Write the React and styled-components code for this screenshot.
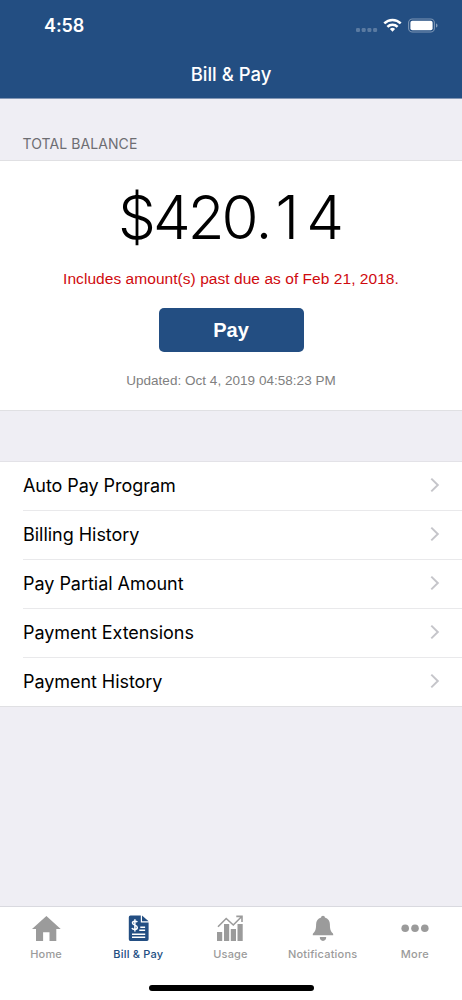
import React from "react";
import styled, { createGlobalStyle } from "styled-components";

const blue = "#234e82";
const gray = "#9b9b9b";
const inter = `Inter, "Liberation Sans", sans-serif`;
const helvetica = `"Liberation Sans", Arial, sans-serif`;

const GlobalStyle = createGlobalStyle`
  * { box-sizing: border-box; }
  body { margin: 0; background: #efeef4; font-family: ${inter}; }
`;

const Screen = styled.div`
  width: 462px;
  height: 1000px;
  display: flex;
  flex-direction: column;
  background: #efeef4;
  overflow: hidden;
`;

const Header = styled.header`
  flex: none;
  height: 99px;
  background: ${blue};
  border-bottom: 1px solid #8296b4;
  color: #fff;
`;

const StatusBar = styled.div`
  height: 50px;
  padding: 1px 24px 0 44px;
  display: flex;
  align-items: center;
  justify-content: space-between;
`;

const Clock = styled.span`
  font-size: 18px;
  font-weight: 600;
  letter-spacing: -0.1px;
`;

const StatusIcons = styled.svg`
  display: block;
`;

const NavTitle = styled.h1`
  margin: 0;
  height: 48px;
  line-height: 49px;
  text-align: center;
  font-size: 18.5px;
  font-weight: 550;
  letter-spacing: 0;
`;

const SectionLabel = styled.h2`
  flex: none;
  margin: 0;
  height: 62px;
  padding: 36px 22.5px 0;
  border-bottom: 1px solid #e0e0e3;
  font-size: 14px;
  line-height: 18px;
  font-weight: 400;
  letter-spacing: 0.08px;
  color: #6d6d72;
`;

const BalanceCard = styled.section`
  flex: none;
  height: 249px;
  background: #fff;
  display: flex;
  flex-direction: column;
  align-items: center;
  padding-top: 20px;
  font-family: ${helvetica};
`;

const Amount = styled.div`
  height: 72px;
  line-height: 72px;
  font-family: ${inter};
  font-size: 60px;
  font-weight: 300;
  color: #000;
`;

const Kern = styled.span`
  letter-spacing: ${(p) => p.$spacing}px;
`;

const PastDue = styled.p`
  margin: 16px 0 0;
  font-size: 15.5px;
  line-height: 20px;
  letter-spacing: 0.05px;
  color: #cf0a0e;
`;

const PayButton = styled.button`
  margin: 19px 0 0;
  width: 145px;
  height: 44px;
  padding: 0;
  border: 0;
  border-radius: 5px;
  background: ${blue};
  color: #fff;
  font-family: ${helvetica};
  font-size: 20px;
  font-weight: 700;
`;

const Updated = styled.p`
  margin: 20px 0 0;
  font-size: 13.5px;
  line-height: 18px;
  letter-spacing: 0.03px;
  color: #808080;
`;

const Menu = styled.ul`
  flex: none;
  list-style: none;
  margin: 0;
  padding: 0 0 0 23px;
  background: #fff;
  border-bottom: 1px solid #e0e0e3;
  border-top: 1px solid #e3e2e7;
`;

const Gap = styled.div`
  flex: none;
  height: 51px;
  border-top: 1px solid #e0e0e3;
`;

const MenuItem = styled.li`
  height: 49px;
  padding: 0 22px 2px 0;
  display: flex;
  align-items: center;
  justify-content: space-between;
  border-bottom: 1px solid #e9e9eb;
  font-size: 18px;
  color: #000;
  &:last-child { border-bottom: 0; height: 48px; }
`;

const TabBar = styled.nav`
  flex: none;
  height: 94px;
  margin-top: auto;
  background: #fff;
  border-top: 1px solid #d9d9df;
  display: flex;
  flex-direction: column;
  align-items: center;
`;

const Tabs = styled.div`
  width: 100%;
  height: 78px;
  display: grid;
  grid-template-columns: repeat(5, 92.2px);
`;

const Tab = styled.div`
  display: flex;
  flex-direction: column;
  align-items: center;
  padding-top: 6px;
  color: ${(p) => (p.$active ? blue : gray)};
`;

const TabIcon = styled.svg`
  display: block;
  fill: currentColor;
`;

const TabLabel = styled.span`
  margin-top: 2px;
  font-size: 11px;
  line-height: 14px;
  font-weight: 500;
  letter-spacing: 0.2px;
`;

const HomeIndicator = styled.div`
  width: 165px;
  height: 6px;
  border-radius: 3px;
  background: #000;
`;

const Chevron = () => (
  <svg width="10" height="16" viewBox="0 0 10 16">
    <path d="M1.3 1.6 7.8 8 1.3 14.4" fill="none" stroke="#c5c5ca" strokeWidth="2" />
  </svg>
);

const HomeIcon = () => (
  <TabIcon width="32" height="32" viewBox="0 0 32 32">
    <path d="M16.4 3 30.7 16H26.3V28H19.5V19.3H13.1V28H6V16H2Z" />
  </TabIcon>
);

const BillIcon = () => (
  <TabIcon width="32" height="32" viewBox="0 0 32 32">
    <path d="M8.4 2.6H18.8V9.5H26.6V26.3Q26.6 28 25 28H8.2Q6.8 28 6.8 26.3V4.3Q6.8 2.6 8.4 2.6Z" />
    <path d="M20 2.6 26.6 8.3H20Z" />
    <path d="M15.3 9.2C14.7 8 10.5 7.5 10.5 10 10.5 12.6 15.3 11.6 15.3 14.6 15.3 17.2 10.7 17 10 15M12.9 6.2V18.6" fill="none" stroke="#fff" strokeWidth="1.5" />
    <path d="M18.3 14.2h4.8M17.3 17.3h5.8M10 21.2h13.2M10 24.3h13.2" fill="none" stroke="#fff" strokeWidth="1.4" />
  </TabIcon>
);

const UsageIcon = () => (
  <TabIcon width="32" height="32" viewBox="0 0 32 32">
    <path d="M3 19h5.2v9H3ZM10 11h5.2v17H10ZM16.8 16H22v12h-5.2ZM23.5 11h5.2v17h-5.2Z" />
    <path d="M4 13.8 12.2 5.5 19.3 12 27.5 3.8M22.3 3.4H28V9" fill="none" stroke="currentColor" strokeWidth="1.6" />
  </TabIcon>
);

const BellIcon = () => (
  <TabIcon width="32" height="32" viewBox="0 0 32 32">
    <path d="M16 2.7c1.1 0 1.9.8 1.9 1.8 3.2.8 5 3.5 5 6.8 0 5 .8 7 2.8 9 .5.5.5.9.5 1.9H5.8c0-1 0-1.4.5-1.9 2-2 2.8-4 2.8-9 0-3.3 1.8-6 5-6.8 0-1 .8-1.8 1.9-1.8Z" />
    <path d="M12.8 24.1h6.4a3.2 3.8 0 0 1-6.4 0Z" />
  </TabIcon>
);

const MoreIcon = () => (
  <TabIcon width="32" height="32" viewBox="0 0 32 32">
    <circle cx="6.2" cy="15.3" r="3.8" />
    <circle cx="16" cy="15.3" r="3.8" />
    <circle cx="25.8" cy="15.3" r="3.8" />
  </TabIcon>
);

const menu = [
  ["Auto Pay Program", -0.06],
  ["Billing History", -0.03],
  ["Pay Partial Amount", -0.03],
  ["Payment Extensions", -0.06],
  ["Payment History", -0.06],
];

const tabs = [
  { label: "Home", Icon: HomeIcon },
  { label: "Bill & Pay", Icon: BillIcon, active: true },
  { label: "Usage", Icon: UsageIcon },
  { label: "Notifications", Icon: BellIcon },
  { label: "More", Icon: MoreIcon },
];

export default function App() {
  return (
    <Screen>
      <GlobalStyle />
      <Header>
        <StatusBar>
          <Clock>4:58</Clock>
          <StatusIcons width="82" height="16" viewBox="0 0 82 16">
            <g fill="#fff" fillOpacity="0.25">
              <rect x="0" y="10" width="4" height="4" rx="1.2" />
              <rect x="5.7" y="10" width="4" height="4" rx="1.2" />
              <rect x="11.4" y="10" width="4" height="4" rx="1.2" />
              <rect x="17.1" y="10" width="4" height="4" rx="1.2" />
            </g>
            <g fill="none" stroke="#fff" strokeWidth="2.5">
              <path d="M28.3 5.4a11.5 11.5 0 0 1 16.4 0" />
              <path d="M31.4 8.8a7.2 7.2 0 0 1 10.2 0" />
            </g>
            <path d="M36.5 13.7 33.9 11a3.8 3.8 0 0 1 5.2 0Z" fill="#fff" />
            <rect x="52.6" y="1" width="25.8" height="13" rx="3.8" fill="none" stroke="#fff" strokeOpacity="0.4" strokeWidth="1.1" />
            <rect x="54.4" y="2.8" width="22.2" height="9.4" rx="2" fill="#fff" />
            <path d="M80 5.4c2 .7 2 3.5 0 4.2Z" fill="#fff" fillOpacity="0.45" />
          </StatusIcons>
        </StatusBar>
        <NavTitle>Bill &amp; Pay</NavTitle>
      </Header>
      <SectionLabel>TOTAL BALANCE</SectionLabel>
      <BalanceCard>
        <Amount>
          <Kern $spacing={-3}>$420</Kern>
          <Kern $spacing={3}>.</Kern>
          <Kern $spacing={7}>1</Kern>4
        </Amount>
        <PastDue>Includes amount(s) past due as of Feb 21, 2018.</PastDue>
        <PayButton>Pay</PayButton>
        <Updated>Updated: Oct 4, 2019 04:58:23 PM</Updated>
      </BalanceCard>
      <Gap />
      <Menu>
        {menu.map(([label, spacing]) => (
          <MenuItem key={label}>
            <Kern $spacing={spacing}>{label}</Kern>
            <Chevron />
          </MenuItem>
        ))}
      </Menu>
      <TabBar>
        <Tabs>
          {tabs.map(({ label, Icon, active }) => (
            <Tab key={label} $active={active}>
              <Icon />
              <TabLabel>{label}</TabLabel>
            </Tab>
          ))}
        </Tabs>
        <HomeIndicator />
      </TabBar>
    </Screen>
  );
}
